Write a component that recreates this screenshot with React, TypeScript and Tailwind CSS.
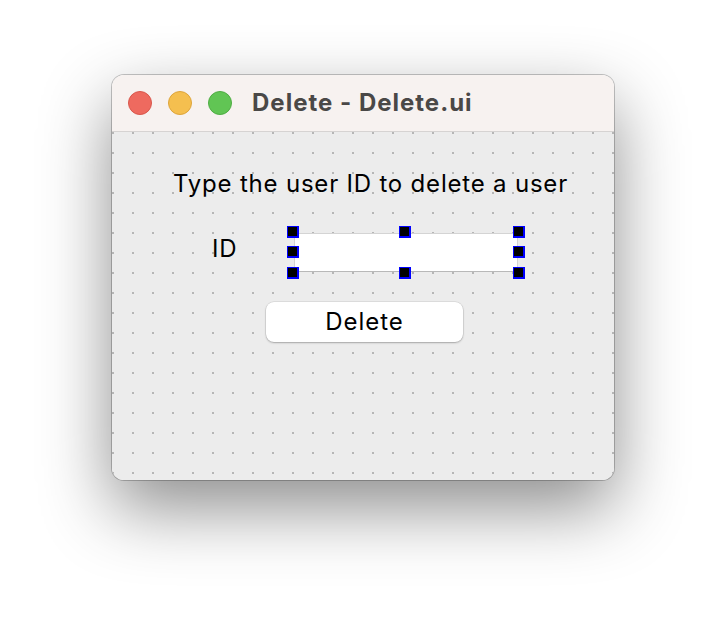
import React from 'react';

const font = { fontFamily: 'Inter, "Liberation Sans", sans-serif' };

function Handle({ className }: { className: string }) {
  return (
    <span
      className={`absolute w-[12px] h-[12px] bg-black border-t border-l border-r-2 border-b-2 border-[#0000ff] ${className}`}
    />
  );
}

function TrafficLights() {
  return (
    <div className="flex items-center gap-4">
      <span className="w-6 h-6 rounded-full bg-[#ee6a5f] border border-[#d9574c]" />
      <span className="w-6 h-6 rounded-full bg-[#f5bf4f] border border-[#dea53b]" />
      <span className="w-6 h-6 rounded-full bg-[#61c554] border border-[#4fad43]" />
    </div>
  );
}

export default function App() {
  return (
    <div className="min-h-screen bg-white pt-[75px] pl-[112px]" style={font}>
      <div className="w-[502px] h-[405px] rounded-[12px] overflow-hidden flex flex-col shadow-[0_0_0_1px_rgba(0,0,0,0.22),0_28px_70px_rgba(0,0,0,0.45)]">
        <div className="h-[57px] shrink-0 flex items-center pl-4 bg-[#f7f2f0] border-b border-[#d6d3d2]">
          <TrafficLights />
          <span className="ml-5 text-[24px] leading-[28px] font-bold tracking-[1px] text-[#4a4847]">Delete - Delete.ui</span>
        </div>

        <div className="flex-1 flex flex-col pt-[38px] bg-[#ececec] bg-[radial-gradient(circle,#b6b6b6_1px,transparent_1.2px)] bg-[size:20px_20px] bg-[position:-9px_-9px]">
          <p className="pl-[61px] text-[24px] leading-[28px] tracking-[0.8px] text-black">Type the user ID to delete a user</p>

          <div className="mt-[35px] flex items-start">
            <label htmlFor="uid" className="ml-[100px] mt-[2px] text-[24px] leading-[28px] tracking-[0.8px] text-black">
              ID
            </label>
            <div className="relative ml-[57px] w-[224px] h-[39px]">
              <input
                id="uid"
                type="text"
                className="w-full h-full bg-white border border-[#d4d4d4] border-b-[#b8b8b8] outline-none"
              />
              <Handle className="-left-[7px] -top-[7px]" />
              <Handle className="left-[105px] -top-[7px]" />
              <Handle className="-right-[7px] -top-[7px]" />
              <Handle className="-left-[7px] top-[13px]" />
              <Handle className="-right-[7px] top-[13px]" />
              <Handle className="-left-[7px] -bottom-[7px]" />
              <Handle className="left-[105px] -bottom-[7px]" />
              <Handle className="-right-[7px] -bottom-[7px]" />
            </div>
          </div>

          <button
            type="button"
            className="mt-[30px] ml-[154px] w-[197px] h-[40px] rounded-[8px] bg-white text-[24px] leading-[28px] tracking-[1px] text-black shadow-[0_0_0_0.5px_rgba(0,0,0,0.12),0_1px_2px_rgba(0,0,0,0.25)]"
          >
            Delete
          </button>
        </div>
      </div>
    </div>
  );
}
